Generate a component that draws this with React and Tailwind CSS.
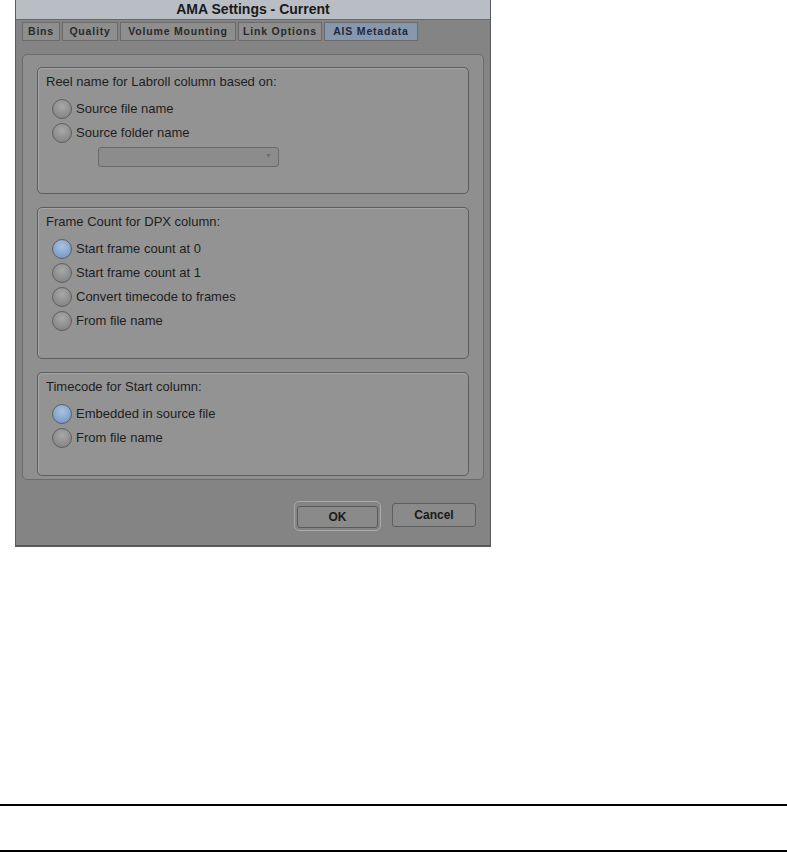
import React from "react";

const tabs = [
  { name: "Bins", w: 38 },
  { name: "Quality", w: 56 },
  { name: "Volume Mounting", w: 116 },
  { name: "Link Options", w: 84 },
  { name: "AIS Metadata", w: 94 },
];

function Radio({ label, checked }) {
  return (
    <div className="flex items-center h-[24px] ml-[6px]">
      <span
        className={`w-[20px] h-[20px] rounded-full border border-[#5f5f5f] mr-[4px] ${
          checked
            ? "bg-[radial-gradient(circle_at_50%_35%,#a9c2e2,#6d8fbd)]"
            : "bg-[radial-gradient(circle_at_50%_35%,#a8a8a8,#7c7c7c)]"
        }`}
      />
      <span className="text-[13px] text-[#1e1e1e]">{label}</span>
    </div>
  );
}

function Group({ title, height, children }) {
  return (
    <div
      className="border border-[#5c5c5c] rounded-[5px] bg-[#939393] pl-[8px] pt-[4px] shadow-[inset_1px_1px_0_#a5a5a5]"
      style={{ height }}
    >
      <div className="text-[13px] text-[#1e1e1e] mb-[5px]">{title}</div>
      {children}
    </div>
  );
}

export default function App() {
  return (
    <div className="w-[787px] h-[852px] bg-white relative" style={{ fontFamily: '"Liberation Sans", Arial, sans-serif' }}>
      <div className="ml-[15px] w-[476px] h-[547px] bg-[#848484] border-l border-r border-b-2 border-[#5a5a5a] flex flex-col">
        {/* title bar */}
        <div className="h-[20px] bg-[#b9bdc4] border-b border-[#6a6a6a] flex items-center justify-center">
          <span className="text-[14px] font-bold text-[#1a1a1a]">AMA Settings - Current</span>
        </div>

        {/* tabs */}
        <div className="flex pl-[6px] pt-[2px] gap-[2px]">
          {tabs.map((t) => (
            <div
              key={t.name}
              className={`h-[19px] flex items-center justify-center border border-[#6a6a6a] text-[10.5px] font-bold tracking-[0.8px] ${
                t.name === "AIS Metadata" ? "bg-[#8797ad] text-[#1f2a3a]" : "bg-[#8e8e8e] text-[#2a2a2a]"
              }`}
              style={{ width: t.w }}
            >
              {t.name}
            </div>
          ))}
        </div>

        {/* content panel */}
        <div className="mx-[6px] mt-[13px] h-[426px] border border-[#6c6c6c] rounded-[5px] bg-[#8f8f8f] px-[14px] pt-[12px] flex flex-col gap-[13px]">
          <Group title="Reel name for Labroll column based on:" height={127}>
            <Radio label="Source file name" />
            <Radio label="Source folder name" />
            <div className="ml-[52px] mt-[2px] w-[181px] h-[20px] border border-[#6a6a6a] rounded-[3px] bg-[#8c8c8c] flex items-center justify-end pr-[6px]">
              <span className="text-[7px] text-[#6e6e6e]">▼</span>
            </div>
          </Group>
          <Group title="Frame Count for DPX column:" height={152}>
            <Radio label="Start frame count at 0" checked />
            <Radio label="Start frame count at 1" />
            <Radio label="Convert timecode to frames" />
            <Radio label="From file name" />
          </Group>
          <Group title="Timecode for Start column:" height={104}>
            <Radio label="Embedded in source file" checked />
            <Radio label="From file name" />
          </Group>
        </div>

        {/* buttons */}
        <div className="flex justify-end pr-[14px] mt-[21px] gap-[11px]">
          <div className="p-[2px] rounded-[5px] border border-[#aaaaaa]">
            <button className="w-[81px] h-[22px] border border-[#5a5a5a] rounded-[3px] bg-[#8a8a8a] text-[12px] font-bold text-[#1a1a1a]">OK</button>
          </div>
          <button className="mt-[2px] w-[84px] h-[24px] border border-[#5e5e5e] rounded-[3px] bg-[#8a8a8a] text-[12px] font-bold text-[#1a1a1a]">Cancel</button>
        </div>
      </div>

      <div className="absolute left-0 top-[804px] w-[787px] h-[2px] bg-black" />
      <div className="absolute left-0 top-[850px] w-[787px] h-[2px] bg-black" />
    </div>
  );
}
